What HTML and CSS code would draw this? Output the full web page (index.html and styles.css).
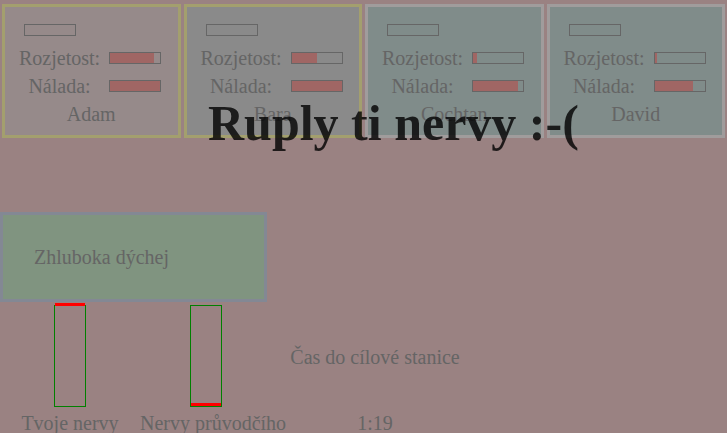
FILE: index.html
```html
<!DOCTYPE html>
<html lang="cs">
<head>
<meta charset="utf-8">
<title>Ruply ti nervy</title>
<link rel="stylesheet" href="styles.css">
</head>
<body>
<div class="page">
  <div class="cards">
    <div class="card card-warm">
      <div class="stats">
        <span class="bar bar-empty"></span><span></span>
        <span class="label">Rozjetost:</span><span class="bar"><span class="fill" style="width:87%"></span></span>
        <span class="label">Nálada:</span><span class="bar"><span class="fill" style="width:100%"></span></span>
      </div>
      <div class="name">Adam</div>
    </div>
    <div class="card card-gray">
      <div class="stats">
        <span class="bar bar-empty"></span><span></span>
        <span class="label">Rozjetost:</span><span class="bar"><span class="fill" style="width:51%"></span></span>
        <span class="label">Nálada:</span><span class="bar"><span class="fill" style="width:100%"></span></span>
      </div>
      <div class="name">Bara</div>
    </div>
    <div class="card card-cool">
      <div class="stats">
        <span class="bar bar-empty"></span><span></span>
        <span class="label">Rozjetost:</span><span class="bar"><span class="fill" style="width:8%"></span></span>
        <span class="label">Nálada:</span><span class="bar"><span class="fill" style="width:89%"></span></span>
      </div>
      <div class="name">Cochtan</div>
    </div>
    <div class="card card-cool">
      <div class="stats">
        <span class="bar bar-empty"></span><span></span>
        <span class="label">Rozjetost:</span><span class="bar"><span class="fill" style="width:5%"></span></span>
        <span class="label">Nálada:</span><span class="bar"><span class="fill" style="width:77%"></span></span>
      </div>
      <div class="name">David</div>
    </div>
  </div>

  <div class="advice">Zhluboka dýchej</div>

  <div class="meters">
    <div class="tube-cell"><div class="tube"><span class="marker" style="bottom:100%"></span></div></div>
    <div class="tube-cell"><div class="tube"><span class="marker" style="bottom:0%"></span></div></div>
    <div class="timer-cell">Čas do cílové stanice</div>
    <div class="caption">Tvoje nervy</div>
    <div class="caption">Nervy průvodčího</div>
    <div class="timer-cell timer-value">1:19</div>
  </div>

  <div class="overlay">
    <h1 class="gameover">Ruply ti nervy :-(</h1>
  </div>
</div>
</body>
</html>
```

FILE: styles.css
```css
html, body {
  margin: 0;
  padding: 0;
}

body {
  background: #9a8282;
  font-family: "Liberation Serif", "Times New Roman", serif;
  font-size: 20px;
  color: #656565;
  overflow: hidden;
}

.page {
  position: relative;
  width: 727px;
  height: 433px;
}

.cards {
  display: flex;
  gap: 3px;
  padding: 4px 2px 0;
}

.card {
  flex: 1;
  border: 3px solid;
  padding: 9px 0 7px;
}

.card-warm {
  background: #968a8a;
  border-color: #a39f6e;
}

.card-gray {
  background: #8a8a8a;
  border-color: #a39f6e;
}

.card-cool {
  background: #808c8a;
  border-color: #a09c9c;
}

.stats {
  display: grid;
  grid-template-columns: 81px 52px;
  grid-auto-rows: 28px;
  column-gap: 9px;
  align-items: center;
  padding-left: 14px;
}

.label {
  text-align: center;
  white-space: nowrap;
  line-height: 28px;
}

.bar {
  display: block;
  box-sizing: border-box;
  width: 52px;
  height: 12px;
  border: 1px solid #666;
}

.bar-empty {
  margin-left: 5px;
}

.fill {
  display: block;
  height: 100%;
  background: #a06664;
}

.name {
  text-align: center;
  line-height: 28px;
}

.advice {
  box-sizing: border-box;
  width: 267px;
  height: 90px;
  margin-top: 74px;
  background: #809480;
  border: 3px solid #838894;
  padding-left: 31px;
  display: flex;
  align-items: center;
}

.meters {
  display: grid;
  grid-template-columns: 132px 132px 184px;
  column-gap: 4px;
  margin-left: 4px;
}

.tube-cell {
  display: flex;
  justify-content: center;
  padding: 3px 0 5px;
}

.tube {
  position: relative;
  width: 30px;
  height: 100px;
  border: 1px solid #008000;
}

.marker {
  position: absolute;
  left: 0;
  width: 30px;
  height: 3px;
  background: #ff0000;
}

.caption {
  text-align: center;
  white-space: nowrap;
}

.timer-cell {
  padding-left: 14px;
  width: 170px;
  text-align: center;
  white-space: nowrap;
  align-self: center;
}

.timer-value {
  align-self: start;
}

.overlay {
  position: absolute;
  inset: 0;
  padding: 95px 0 0 208px;
  pointer-events: none;
}

.gameover {
  margin: 0;
  font-size: 50px;
  font-weight: bold;
  line-height: 57px;
  color: rgba(0, 0, 0, 0.8);
  white-space: nowrap;
}
```
